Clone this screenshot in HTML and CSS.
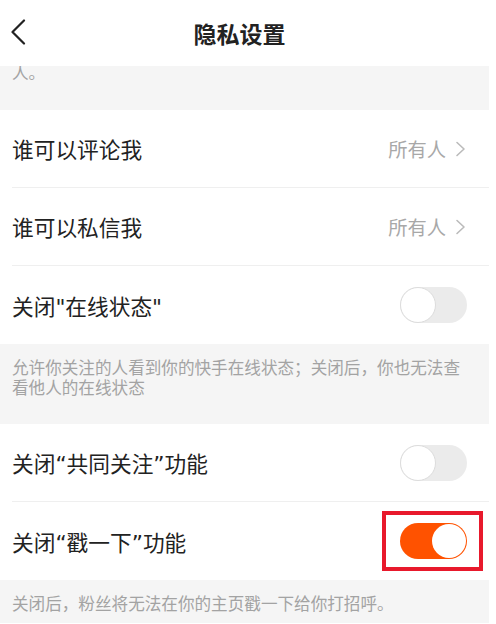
FILE: index.html
```html
<!DOCTYPE html>
<html lang="zh-CN">
<head>
    <meta charset="UTF-8">
    <meta name="viewport" content="width=device-width, initial-scale=1.0">
    <title>隐私设置</title>
    <link rel="stylesheet" href="styles.css">
</head>
<body>
    <div class="page">
        <header class="topbar">
            <span class="back">
                <svg width="16" height="26" viewBox="0 0 16 26">
                    <polyline points="14,1.5 2.5,13 14,24.5" fill="none" stroke="#222" stroke-width="2.2" stroke-linecap="round" stroke-linejoin="round"/>
                </svg>
            </span>
            <h1>隐私设置</h1>
        </header>

        <div class="note note-top">
            <p>人。</p>
        </div>

        <div class="group">
            <div class="row">
                <span class="label">谁可以评论我</span>
                <span class="value">所有人
                    <svg width="11" height="16" viewBox="0 0 11 16">
                        <polyline points="2,1.5 9,8 2,14.5" fill="none" stroke="#bbb" stroke-width="1.6" stroke-linecap="round" stroke-linejoin="round"/>
                    </svg>
                </span>
            </div>
            <div class="row">
                <span class="label">谁可以私信我</span>
                <span class="value">所有人
                    <svg width="11" height="16" viewBox="0 0 11 16">
                        <polyline points="2,1.5 9,8 2,14.5" fill="none" stroke="#bbb" stroke-width="1.6" stroke-linecap="round" stroke-linejoin="round"/>
                    </svg>
                </span>
            </div>
            <div class="row">
                <span class="label">关闭"在线状态"</span>
                <span class="switch"></span>
            </div>
        </div>

        <div class="note">
            <p>允许你关注的人看到你的快手在线状态；关闭后，你也无法查看他人的在线状态</p>
        </div>

        <div class="group">
            <div class="row">
                <span class="label">关闭“共同关注”功能</span>
                <span class="switch"></span>
            </div>
            <div class="row">
                <span class="label">关闭“戳一下”功能</span>
                <span class="switch on marked"></span>
            </div>
        </div>

        <div class="note note-bottom">
            <p>关闭后，粉丝将无法在你的主页戳一下给你打招呼。</p>
        </div>
    </div>
</body>
</html>
```

FILE: styles.css
```css
body {
    margin: 0;
    background: #fff;
    font-family: 'Noto Sans CJK SC', 'Noto Sans', sans-serif;
    color: #222;
}

.page {
    width: 489px;
    height: 624px;
    overflow: hidden;
}

.topbar {
    position: relative;
    z-index: 2;
    height: 66px;
    background: #fff;
    display: flex;
    align-items: center;
    justify-content: center;
}

.topbar h1 {
    margin: 0 10px 0 0;
    font-size: 23px;
    font-weight: bold;
    line-height: 1;
    color: #222;
}

.back {
    position: absolute;
    left: 10px;
    top: 19px;
    display: flex;
}

.note {
    background: #f5f5f5;
    padding: 14px 28px 27px 12px;
}

.note p {
    margin: 0;
    font-size: 16.6px;
    line-height: 19.5px;
    color: #a3a3a3;
}

.note-top {
    height: 44px;
    box-sizing: border-box;
    padding: 0 12px;
    overflow: hidden;
}

.note-top p {
    margin-top: -3px;
}

.note-bottom {
    height: 43px;
    box-sizing: border-box;
}

.group {
    background: #fff;
}

.row {
    height: 78px;
    box-sizing: border-box;
    margin-left: 12px;
    padding-right: 22px;
    display: flex;
    align-items: center;
    justify-content: space-between;
    border-bottom: 1px solid #efefef;
}

.row:last-child {
    border-bottom: none;
}

.label {
    font-family: 'DejaVu Sans', 'Noto Sans CJK SC', sans-serif;
    font-size: 21.7px;
    color: #222;
}

.value {
    display: flex;
    align-items: center;
    gap: 9px;
    font-size: 19.3px;
    color: #a8a8a8;
    margin-right: 1px;
}

.switch {
    position: relative;
    width: 67px;
    height: 36px;
    border-radius: 18px;
    background: #ebebeb;
    box-sizing: border-box;
}

.switch::before {
    content: "";
    position: absolute;
    left: 0;
    top: 0;
    width: 36px;
    height: 36px;
    border-radius: 50%;
    background: #fff;
    border: 1.5px solid #dcdcdc;
    box-sizing: border-box;
}

.switch.on {
    background: #ff5200;
}

.switch.on::before {
    left: auto;
    right: 1px;
    top: 1px;
    width: 34px;
    height: 34px;
    border: none;
}

.switch.marked::after {
    content: "";
    position: absolute;
    left: -18px;
    right: -16px;
    top: -12px;
    bottom: -12px;
    border: 4px solid #e8192c;
}
```
